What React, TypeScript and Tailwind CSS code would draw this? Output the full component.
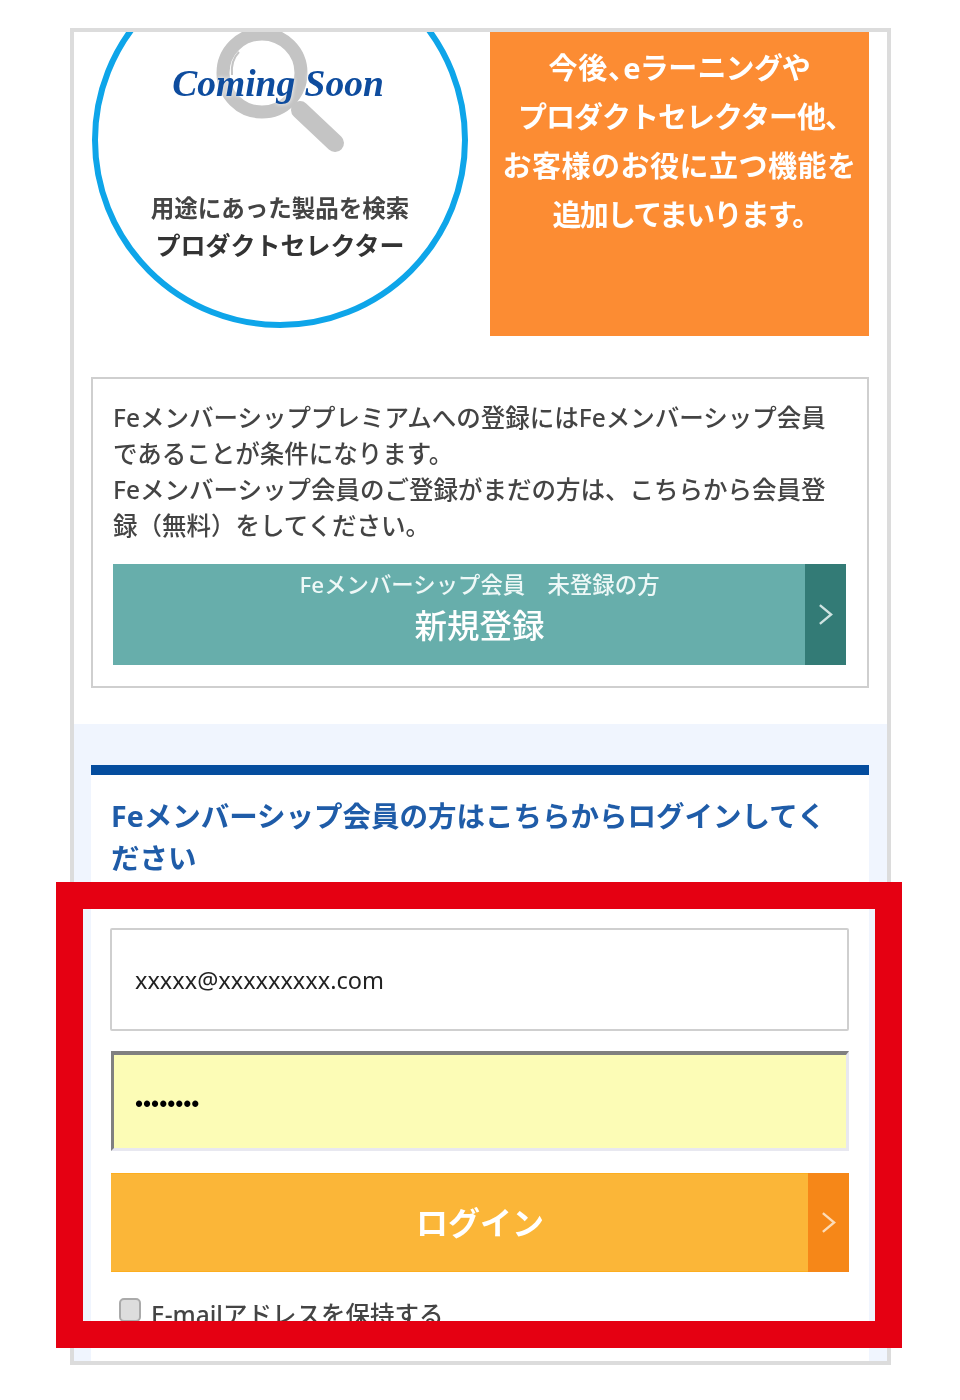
const sans = "font-['Noto_Sans','Noto_Sans_CJK_JP',sans-serif]";

function Chevron({ className }: { className: string }) {
  return (
    <svg viewBox="0 0 16 22" fill="none" stroke="currentColor" strokeWidth={2.5} className={className}>
      <polyline points="2,1 14,11 2,21" />
    </svg>
  );
}

export default function App() {
  return (
    <div className={`relative min-h-[1400px] bg-white pt-[28px] pl-[70px] ${sans}`}>
      {/* phone frame */}
      <div className="w-[821px] h-[1337px] border-4 border-[#dcdcdc] overflow-hidden bg-white blur-[0.7px]">
        {/* top row */}
        <div className="flex justify-between pl-[18px] pr-[18px] h-[304px]">
          <div className="relative w-[376px] h-[376px] -mt-[80px] shrink-0 rounded-full border-[6px] border-[#0ea5e9] flex flex-col items-center pt-[101px]">
            <svg viewBox="0 0 364 364" fill="none" className="absolute inset-0 w-[364px] h-[364px]">
              <circle cx="164" cy="115" r="39" stroke="#c4c4c4" strokeWidth="13" />
              <path d="M134 117 C133 107 136 99 141 94" stroke="#c4c4c4" strokeWidth="2" />
              <line x1="202" y1="152" x2="237" y2="185" stroke="#c4c4c4" strokeWidth="18" strokeLinecap="round" />
            </svg>
            <div className="relative -ml-[4px] h-[50px] leading-[50px] text-[37.5px] font-bold italic text-[#0e4c9e] font-['Liberation_Serif',serif] [text-shadow:0_0_4px_white]">
              Coming Soon
            </div>
            <div className="relative mt-[82px] h-[34px] leading-[34px] text-[23.5px] font-bold text-[#444]">
              用途にあった製品を検索
            </div>
            <div className="relative mt-[2px] h-[36px] leading-[36px] text-[25px] font-bold text-[#333]">
              プロダクトセレクター
            </div>
          </div>
          <div className="w-[379px] h-[304px] bg-[#fc8c33] text-white text-center text-[29px] font-bold leading-[49px] pt-[11px] whitespace-nowrap">
            <div className="[font-feature-settings:'palt'] tracking-[0.8px]">今後、eラーニングや</div>
            <div className="pl-[12px] tracking-[-1px]">プロダクトセレクター他、</div>
            <div className="tracking-[0.5px]">お客様のお役に立つ機能を</div>
            <div className="pl-[13px] tracking-[-1.8px]">追加してまいります。</div>
          </div>
        </div>

        {/* notice */}
        <div className="ml-[17px] mr-[18px] mt-[41px] border-2 border-[#cfcfcf] pl-[20px] pr-[21px] pt-[21px] pb-[21px]">
          <p className="text-[24.5px] leading-[36px] font-medium text-[#444] whitespace-nowrap">
            Feメンバーシッププレミアムへの登録にはFeメンバーシップ会員
            <br />
            であることが条件になります。
            <br />
            Feメンバーシップ会員のご登録がまだの方は、こちらから会員登
            <br />
            録（無料）をしてください。
          </p>
          <a className="relative mt-[20px] block h-[101px] bg-[#67aeab] text-white text-center">
            <div className="pt-[6px] text-[22.4px] leading-[30px] font-medium text-[#eef8f7]">Feメンバーシップ会員　未登録の方</div>
            <div className="text-[32.5px] leading-[52px] font-medium">新規登録</div>
            <span className="absolute right-0 top-0 bottom-0 w-[41px] bg-[#337b76] flex items-center justify-center">
              <Chevron className="w-[15px] h-[21px] text-[#cfe3e1]" />
            </span>
          </a>
        </div>

        {/* login */}
        <div className="mt-[36px] bg-[#f0f5fe] pl-[17px] pr-[18px] pt-[41px] h-[637px]">
          <div className="bg-white border-t-[10px] border-[#054d9e] h-[596px]">
            <h2 className="pl-[20px] pr-[40px] pt-[20px] text-[28.5px] leading-[42px] font-bold text-[#1f5ca8]">
              Feメンバーシップ会員の方はこちらからログインしてください
            </h2>
            <div className="px-[19px] mt-[49px]">
              <input
                readOnly
                type="text"
                value="xxxxx@xxxxxxxxx.com"
                className="block w-[739px] h-[103px] border-2 border-[#cfcfcf] rounded-[2px] bg-white px-[23px] text-[23.5px] text-[#222] outline-none"
              />
              <input
                readOnly
                type="password"
                value="xxxxxxxx"
                className="block w-[738px] ml-px mt-[20px] h-[100px] border-t-[4px] border-l-[3px] border-r-[3px] border-b-[3px] border-t-[#808080] border-l-[#808080] border-r-[#e8e8f0] border-b-[#e8e8f0] bg-[#fcfcb6] px-[21px] pt-[6px] text-[23px] font-['Liberation_Sans',sans-serif] text-black outline-none"
              />
              <a className="relative block ml-px mt-[22px] w-[738px] h-[99px] bg-[#fbb638] border-t border-b border-[#fdae1f] text-white text-center text-[32px] font-bold leading-[97px]">
                ログイン
                <span className="absolute right-0 -top-px -bottom-px w-[41px] bg-[#f68718] flex items-center justify-center">
                  <Chevron className="w-[15px] h-[21px] text-[#fcdcb8]" />
                </span>
              </a>
              <label className="mt-[30px] ml-[9px] flex items-start gap-[10px] text-[24.5px] leading-[26px] font-medium text-[#444]">
                <input type="checkbox" readOnly className="appearance-none -mt-[4px] w-[22px] h-[24px] rounded-[5px] border-2 border-[#aaa] bg-[#ddd]" />
                <span>E-mailアドレスを保持する</span>
              </label>
            </div>
          </div>
        </div>
      </div>

      {/* red annotation frame */}
      <div className="absolute left-[56px] top-[882px] w-[846px] h-[466px] border-[27px] border-[#e50012] pointer-events-none" />
    </div>
  );
}
